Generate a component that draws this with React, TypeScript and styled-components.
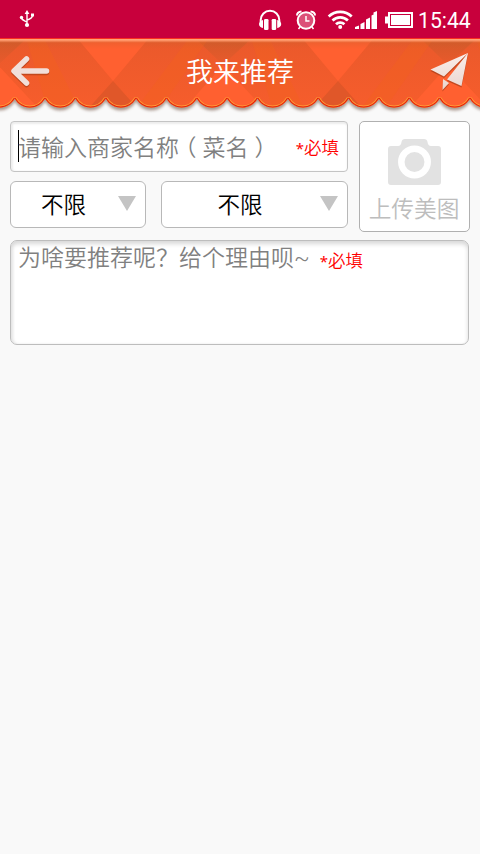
import React from "react";
import styled, { createGlobalStyle } from "styled-components";

const GlobalStyle = createGlobalStyle`
  * { box-sizing: border-box; }
  body {
    margin: 0;
    background: #f9f9f9;
    font-family: "Noto Sans CJK SC", sans-serif;
    font-weight: 350;
  }
`;

const Screen = styled.div`
  width: 480px;
  min-height: 854px;
  background: #f9f9f9;
  display: flex;
  flex-direction: column;
`;

const StatusBar = styled.div`
  height: 38px;
  background: #c8003c;
  display: flex;
  justify-content: space-between;
`;

const Clock = styled.span`
  width: 54px;
  margin-right: 8px;
  font: 400 21.2px/41px Roboto, sans-serif;
  color: #fff;
  white-space: nowrap;
`;

const StatusRight = styled.div`
  display: flex;
`;

const Header = styled.header`
  position: relative;
  height: 83px;
  display: flex;
  justify-content: space-between;
`;

const Backdrop = styled.svg`
  position: absolute;
  inset: 0;
`;

const HeaderButton = styled.button`
  position: relative;
  padding: 0;
  border: 0;
  background: none;
  width: 60px;
  height: 66px;
`;

const Title = styled.h1`
  position: relative;
  margin: 0;
  font-size: 27px;
  font-weight: 350;
  line-height: 66px;
  color: #fff;
`;

const Form = styled.main`
  padding: 0 10px;
  display: flex;
  flex-direction: column;
  gap: 8px;
`;

const TopArea = styled.div`
  display: flex;
  gap: 11px;
`;

const Fields = styled.div`
  width: 338px;
  display: flex;
  flex-direction: column;
  gap: 9px;
`;

const NameField = styled.div`
  height: 51px;
  border: 1px solid #c4c4c4;
  border-radius: 4px;
  background: #fff;
  box-shadow: inset 0 2px 2px #ececec, inset 2px 0 2px #f0f0f0;
  display: flex;
  align-items: center;
  padding: 0 8px 0 7px;
`;

const Caret = styled.i`
  width: 1px;
  height: 32px;
  margin: -2px -1px 0 0;
  background: #000;
`;

const Placeholder = styled.span`
  font-size: 23px;
  line-height: 34px;
  margin-top: -2px;
  color: #808080;
  white-space: nowrap;
`;

const Paren = styled.span`
  font-feature-settings: "halt";
  margin: 0 6px;
`;

const Required = styled.span`
  display: flex;
  font-size: 17.5px;
  line-height: 26px;
  color: #f00;
  white-space: nowrap;
`;

const Star = styled.span`
  font-family: "Noto Sans", sans-serif;
  font-weight: 400;
  font-size: 15px;
  line-height: 29px;
  height: 26px;
`;

const NameRequired = styled(Required)`
  margin-left: auto;
`;

const Selects = styled.div`
  display: flex;
  gap: 15px;
`;

const Select = styled.button<{ $width: number }>`
  width: ${(p) => p.$width}px;
  height: 47px;
  padding: 0 9px 0 0;
  border: 1px solid #b8b8b8;
  border-radius: 6px;
  background: #fff;
  display: flex;
  align-items: center;
  font: 350 22.5px/34px "Noto Sans CJK SC", sans-serif;
  color: #000;
`;

const SelectLabel = styled.span`
  flex: 1;
  text-align: center;
  margin: -4px 1px 0 -1px;
`;

const Arrow = styled.i`
  border: 9px solid transparent;
  border-top: 15px solid #c4c4c4;
  border-bottom: 0;
  margin-top: -2px;
`;

const Upload = styled.button`
  width: 111px;
  height: 111px;
  padding: 16px 1px 0 0;
  border: 1px solid #b0b0b0;
  border-radius: 5px;
  background: #fff;
  display: flex;
  flex-direction: column;
  align-items: center;
  gap: 6px;
  font: 350 22.7px/34px "Noto Sans CJK SC", sans-serif;
  color: #bdbdbd;
`;

const Reason = styled.div`
  width: 459px;
  height: 105px;
  border: 1px solid #bdbdbd;
  border-radius: 7px;
  background: #fff;
  box-shadow: inset 0 3px 4px #d8d8d8, inset 2px 0 3px #eee;
  padding: 0 7px;
  display: flex;
  align-items: flex-start;
`;

const Tilde = styled.span`
  font-family: Roboto, sans-serif;
  font-weight: 300;
`;

const ReasonRequired = styled(Required)`
  margin: 6px 0 0 10px;
`;

const FIRST = -15.65;
const STEP = 30.35;
const scallop = Array.from({ length: 17 }, (_, i) => {
  const x = FIRST + i * STEP;
  return `C${x + 7} 72.5 ${x + STEP - 7} 72.5 ${x + STEP} 60.5`;
}).join(" ");
const AWNING = `M${FIRST} 0V60.5 ${scallop} V0Z`;
const TILES = [-112, 113, 338];

function Awning() {
  return (
    <Backdrop width="480" height="83" viewBox="0 0 480 83">
      <defs>
        <linearGradient id="lip" x1="0" y1="0" x2="0" y2="1">
          <stop offset="0" stopColor="#ffa77c" />
          <stop offset=".2" stopColor="#ff9a6c" stopOpacity=".8" />
          <stop offset=".4" stopColor="#c8602c" stopOpacity=".25" />
          <stop offset="1" stopColor="#c8602c" stopOpacity="0" />
        </linearGradient>
        <linearGradient id="fold" x1="0" y1="0" x2="0" y2="1">
          <stop offset="0" stopColor="#d25929" />
          <stop offset="1" stopColor="#ea5a2c" />
        </linearGradient>
        <linearGradient id="cloth" x1="0" y1="0" x2="0" y2="1">
          <stop offset="0" stopColor="#ea592b" />
          <stop offset="1" stopColor="#f65d2c" />
        </linearGradient>
        <filter id="soft" x="-5%" y="-20%" width="110%" height="150%">
          <feGaussianBlur stdDeviation="1.8" />
        </filter>
        <clipPath id="awning"><path d={AWNING} /></clipPath>
      </defs>
      <path d={AWNING} transform="translate(0 3)" fill="#6b4a38" opacity=".55" filter="url(#soft)" />
      <path d={AWNING} fill="url(#cloth)" />
      <g clipPath="url(#awning)">
        {TILES.map((x) => (
          <g key={x} transform={`translate(${x} 0)`}>
            <path d="M-36 0H36L0 43Z" fill="#ff6030" />
            <path d="M0 43L-26 72H26Z" fill="#e05729" />
            <path d="M82 0H139L110 27Z" fill="url(#fold)" />
            <path d="M110 27L70 72H152Z" fill="#ff6030" />
            <path d="M76 0H96L46 72H22Z" fill="#f2621f" opacity=".4" />
            <path d="M138 0H156L192 72H160Z" fill="#f2621f" opacity=".4" />
          </g>
        ))}
        <path d={AWNING} fill="none" stroke="#ff9a35" strokeWidth="4" strokeLinejoin="bevel" />
        <path d={AWNING} fill="none" stroke="#e5210d" strokeWidth="2.2" strokeLinejoin="bevel" />
      </g>
      <rect y="1" width="480" height="10" fill="url(#lip)" />
      <rect width="480" height="1" fill="#fa3020" />
    </Backdrop>
  );
}

function UsbIcon() {
  return (
    <svg width="60" height="38" viewBox="0 0 60 38" fill="none" stroke="#fff" strokeWidth="1.4">
      <path d="M27 25V12M27 22C23 20 21.500 20 21.500 17M27 20C31 19 32.500 18 32.500 15" />
      <g fill="#fff" stroke="none">
        <path d="M27 10l2.400 4h-4.800z" /><circle cx="27" cy="25" r="2.100" />
        <circle cx="21.500" cy="17.500" r="1.700" /><path d="M31 13.500h3v3h-3z" />
      </g>
    </svg>
  );
}

function SystemIcons() {
  return (
    <svg width="160" height="38" viewBox="258 0 160 38" fill="none" stroke="#fff">
      <path d="M260.700 22v-2a9.300 9.300 0 0 1 18.600 0v2" strokeWidth="2" />
      <g fill="#fff" stroke="none">
        <rect x="264" y="19" width="4.500" height="11" rx="1.300" />
        <rect x="271.700" y="19" width="4.500" height="11" rx="1.300" />
        <path d="M263 20v8q-4-1-4-4t4-4M277.200 20v8q4-1 4-4t-4-4" />
      </g>
      <circle cx="306" cy="20.500" r="8.300" fill="#dc5078" strokeWidth="2" />
      <path d="M306 16v5h3.500" strokeWidth="1.500" />
      <path d="M297 15.500q0-3.500 4.500-4M315 15.500q0-3.500-4.500-4" strokeWidth="2" />
      <path d="M300 27l-1.500 2M312 27l1.500 2" strokeWidth="1.500" />
      <g strokeWidth="2.700">
        <path d="M328.700 16.500a16.500 16.500 0 0 1 23 0M332.500 20.500a11 11 0 0 1 15.400 0M336 24.300a6 6 0 0 1 8.400 0" />
      </g>
      <circle cx="340.200" cy="27" r="2" fill="#fff" stroke="none" />
      <path d="M355 29v-2l4-1.500V29zM360.500 29v-5l4-2v7zM366 29V19.500l4-2v11.500zM371.500 29V15.500l4-2v15.500zM373.500 12.500l3.500-1.500v18h-3.500z" fill="#fff" stroke="none" />
      <rect x="389" y="13" width="23" height="14" strokeWidth="2" />
      <path d="M391 15h19v10h-19zM385 16.500h4v7h-4z" fill="#fff" stroke="none" />
      <rect x="390.500" y="14.500" width="20" height="11" stroke="#c8003c" strokeWidth="1" />
    </svg>
  );
}

function BackIcon() {
  return (
    <svg width="60" height="66" viewBox="0 0 60 66" fill="none" strokeLinecap="round" strokeLinejoin="round">
      <path d="M26.500 22.500L14 34.500L26.500 46.500M14.500 34.500H46.500" stroke="#8a3010" opacity=".45" strokeWidth="5.500" />
      <path d="M26.500 21L14 33L26.500 45M14.500 33H46.500" stroke="#f1dfda" strokeWidth="5.500" />
    </svg>
  );
}

function SendIcon() {
  return (
    <svg width="60" height="66" viewBox="420 38 60 66">
      <defs>
        <linearGradient id="paper" x1="0" y1="0" x2="0" y2="1">
          <stop offset="0" stopColor="#faeeea" /><stop offset="1" stopColor="#ead5cf" />
        </linearGradient>
        <path id="plane" d="M468 53L430.500 69.500L444 76.500ZM468 53L461.500 86L447 79.500ZM443 79L449 83L442.500 90Z" />
      </defs>
      <use href="#plane" y="1.500" fill="#8a3010" opacity=".5" />
      <use href="#plane" fill="url(#paper)" />
    </svg>
  );
}

function CameraIcon() {
  return (
    <svg width="53" height="47" viewBox="0 0 53 47">
      <path d="M3 8H10Q13 8 13.500 4Q14 1 17 1H36Q39 1 39.500 4Q40 8 43 8H50Q53 8 53 11V44Q53 47 50 47H3Q0 47 0 44V11Q0 8 3 8Z" fill="#e2e2e2" />
      <circle cx="26.500" cy="24" r="13.200" fill="none" stroke="#fff" strokeWidth="6.500" />
    </svg>
  );
}

export default function App() {
  return (
    <Screen>
      <GlobalStyle />
      <StatusBar>
        <UsbIcon />
        <StatusRight>
          <SystemIcons />
          <Clock>15:44</Clock>
        </StatusRight>
      </StatusBar>
      <Header>
        <Awning />
        <HeaderButton><BackIcon /></HeaderButton>
        <Title>我来推荐</Title>
        <HeaderButton><SendIcon /></HeaderButton>
      </Header>
      <Form>
        <TopArea>
          <Fields>
            <NameField>
              <Caret />
              <Placeholder>
                请输入商家名称<Paren>（</Paren>菜名<Paren>）</Paren>
              </Placeholder>
              <NameRequired><Star>*</Star>必填</NameRequired>
            </NameField>
            <Selects>
              <Select $width={136}><SelectLabel>不限</SelectLabel><Arrow /></Select>
              <Select $width={187}><SelectLabel>不限</SelectLabel><Arrow /></Select>
            </Selects>
          </Fields>
          <Upload><CameraIcon />上传美图</Upload>
        </TopArea>
        <Reason>
          <Placeholder>为啥要推荐呢？给个理由呗<Tilde>~</Tilde></Placeholder>
          <ReasonRequired><Star>*</Star>必填</ReasonRequired>
        </Reason>
      </Form>
    </Screen>
  );
}
